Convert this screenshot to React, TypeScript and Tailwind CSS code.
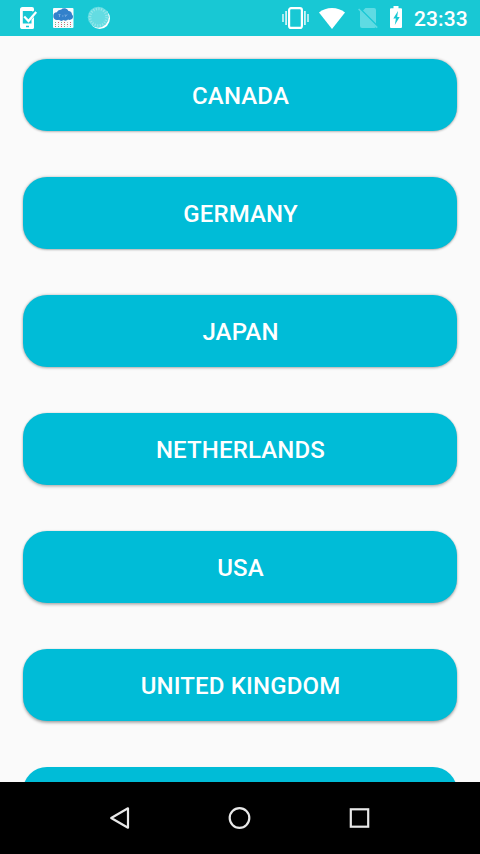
import type { ReactNode } from 'react';

interface Country {
  name: string;
  shadow: string;
}

// Shadows get heavier towards the bottom of the screen
const COUNTRIES: Country[] = [
  { name: 'CANADA', shadow: 'shadow-[0_0_3px_rgba(0,0,0,0.32),0_1px_2px_rgba(0,0,0,0.12)]' },
  { name: 'GERMANY', shadow: 'shadow-[0_0_3px_rgba(0,0,0,0.28),0_1px_2px_rgba(0,0,0,0.18)]' },
  { name: 'JAPAN', shadow: 'shadow-[0_0_3px_rgba(0,0,0,0.24),0_1px_3px_rgba(0,0,0,0.22)]' },
  { name: 'NETHERLANDS', shadow: 'shadow-[0_0_2px_rgba(0,0,0,0.2),0_2px_3px_rgba(0,0,0,0.22)]' },
  { name: 'USA', shadow: 'shadow-[0_0_2px_rgba(0,0,0,0.18),0_2px_3px_rgba(0,0,0,0.25)]' },
  { name: 'UNITED KINGDOM', shadow: 'shadow-[0_0_2px_rgba(0,0,0,0.14),0_2px_3px_rgba(0,0,0,0.3)]' },
  { name: '', shadow: 'shadow-[0_1px_2px_rgba(0,0,0,0.15)]' },
];

const DOT_ROWS = ['grgrxr', 'gxrgrr', 'rgrgxg'];
const DOT_COLORS: Record<string, string> = { r: '#d0606a', g: '#6fb98a', x: '#b9c6bd' };

function PhoneCheckIcon() {
  return (
    <svg className="h-6 w-[22px]" viewBox="0 0 22 24" fill="none">
      <path
        d="M4.5 1H14a2 2 0 0 1 2 2v1.5l-1.5 1.5V5H4.8v13h8.7v-4.5l2.5-2.5v10a2 2 0 0 1-2 2H4.5a2.5 2.5 0 0 1-2.5-2.5V3.5A2.5 2.5 0 0 1 4.5 1Z"
        fill="#fff"
      />
      <path d="M2.5 17.5H16V21a2 2 0 0 1-2 2H4.500a2 2 0 0 1-2-2Z" fill="#fff" />
      <path d="M8 20.5h3" stroke="#18c8d4" strokeWidth="1.5" />
      <path d="m6.2 10.5 4.3 4.5 7.700-9" stroke="#fff" strokeWidth="2.2" />
    </svg>
  );
}

function WeatherIcon() {
  return (
    <svg className="h-5 w-[21px]" viewBox="0 0 21 20">
      <rect width="20.5" height="20" rx="1" fill="#f8fbfd" />
      <path
        d="M4 12a4 4 0 0 1-3.700-4 3.800 3.800 0 0 1 3.500-3.700A4 4 0 0 1 8 1.700 4.500 4.500 0 0 1 15.500 3.100 3.700 3.700 0 0 1 19 6.500a3 3 0 0 1-1 5.100c-1 .6-2.400.4-3 0-1 1.300-3.200 1.600-4.400.5-1.300 1.200-3.500 1.100-4.600-.3-.5.3-1.300.4-2 .2Z"
        fill="#3381cb"
      />
      <path d="M5.500 6.500h2M6.500 6.500V9M9 8h1.500M12 6.500l.5 2 1.500-2" stroke="#86b5e4" strokeWidth="0.8" fill="none" />
      {DOT_ROWS.map((row, y) =>
        row.split('').map((c, x) => (
          <rect key={`${x}-${y}`} x={2 + x * 3} y={14 + y * 2} width="1" height="1" fill={DOT_COLORS[c]} />
        ))
      )}
    </svg>
  );
}

function SpinnerIcon() {
  return (
    <svg className="size-6" viewBox="0 0 24 24" fill="none">
      <circle cx="12.7" cy="12.6" r="10.3" fill="#fff" />
      <circle cx="11.3" cy="11.2" r="10.5" fill="#64dce2" />
      <circle cx="11.3" cy="11.2" r="8.3" stroke="#94e7ea" strokeWidth="2.6" strokeDasharray="1.1 1.5" />
    </svg>
  );
}

function VibrateIcon() {
  return (
    <svg className="h-6 w-7" viewBox="0 0 28 24" fill="none" stroke="#fff">
      <rect x="8.1" y="2.1" width="12.8" height="19.8" rx="2" strokeWidth="2.2" />
      <path d="M5.100 5v14M23.900 5v14" strokeWidth="1.8" strokeOpacity="0.8" />
      <path d="M2 8v8M27 8v8" strokeWidth="1.6" strokeOpacity="0.8" />
    </svg>
  );
}

function WifiIcon() {
  return (
    <svg className="h-[21px] w-[26px]" viewBox="0 0 26 21" fill="#fff">
      <path d="M0 4.6C3.6 1.6 8 .1 13 .1s9.4 1.5 13 4.5L13 21Z" />
    </svg>
  );
}

function NoSimIcon() {
  return (
    <svg className="h-[22px] w-5" viewBox="0 0 20 22" fill="none">
      <path d="M7.500 1H16a2 2 0 0 1 2 2v13.500L5 3.500ZM2 3.500 18 19.500a2 2 0 0 1-2 1.500H4a2 2 0 0 1-2-2Z" fill="#5fdbe3" />
      <path d="m.6 2 18.600 18.600" stroke="#5fdbe3" strokeWidth="1.5" />
    </svg>
  );
}

function BatteryIcon() {
  return (
    <svg className="h-[22px] w-3" viewBox="0 0 12 22">
      <path d="M3.5 0h5v2.200H11a1 1 0 0 1 1 1V21a1 1 0 0 1-1 1H1a1 1 0 0 1-1-1V3.200a1 1 0 0 1 1-1h2.500Z" fill="#fff" />
      <path d="M8 5 3.300 12.500h2.600L4.800 19l4.900-8H7.200Z" fill="#18c8d4" />
    </svg>
  );
}

function StatusBar() {
  return (
    <header className="flex h-9 shrink-0 items-center bg-[#18c8d4] pl-[18px] pr-3">
      <PhoneCheckIcon />
      <div className="ml-[13px]">
        <WeatherIcon />
      </div>
      <div className="ml-[13px]">
        <SpinnerIcon />
      </div>
      <div className="ml-auto flex items-center">
        <VibrateIcon />
        <div className="ml-2.5">
          <WifiIcon />
        </div>
        <div className="ml-[13px]">
          <NoSimIcon />
        </div>
        <div className="ml-3 -mt-0.5">
          <BatteryIcon />
        </div>
        <span className="ml-3 mt-px w-[54px] whitespace-nowrap text-[21px] leading-6 font-medium tracking-[0.1px] text-white">
          23:33
        </span>
      </div>
    </header>
  );
}

function NavButton({ label, children }: { label: string; children: ReactNode }) {
  return (
    <button aria-label={label} className="flex w-[120px] items-center justify-center">
      <svg className="size-6" viewBox="0 0 24 24" fill="none" stroke="#e8e8e8" strokeWidth="2.2">
        {children}
      </svg>
    </button>
  );
}

export default function App() {
  return (
    <div className="flex h-[854px] w-[480px] flex-col overflow-hidden bg-[#fafafa] font-[Roboto,sans-serif]">
      <StatusBar />

      <main className="flex min-h-0 flex-1 flex-col gap-[46px] overflow-hidden px-[23px] pt-[23px]">
        {COUNTRIES.map((c, i) => (
          <button
            key={i}
            className={`h-[72px] shrink-0 rounded-[24px] bg-[#00bcd7] pt-0.5 pl-px text-2xl font-medium tracking-[0.15px] text-white ${c.shadow}`}
          >
            {c.name}
          </button>
        ))}
      </main>

      {/* Navigation bar */}
      <nav className="flex h-[72px] shrink-0 justify-center bg-black">
        <NavButton label="Back">
          <path d="M20 2.300v19.400L3.200 12Z" strokeLinejoin="round" />
        </NavButton>
        <NavButton label="Home">
          <circle cx="11.5" cy="12" r="9.8" />
        </NavButton>
        <NavButton label="Recents">
          <rect x="2.800" y="3.300" width="17.400" height="17.400" />
        </NavButton>
      </nav>
    </div>
  );
}
